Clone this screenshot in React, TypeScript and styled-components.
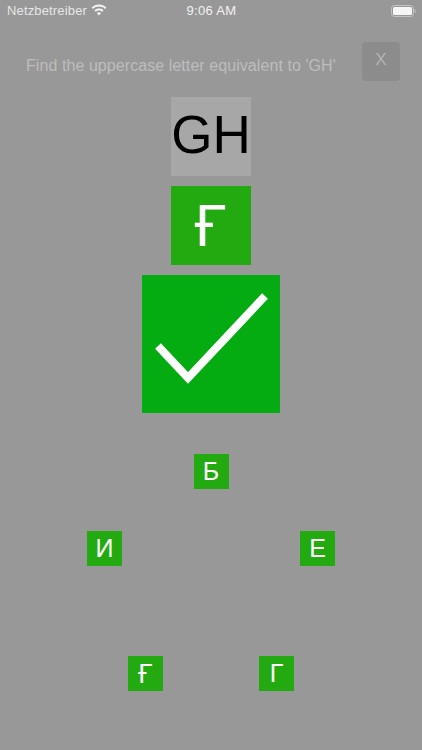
import styled, { createGlobalStyle } from "styled-components";

const GlobalStyle = createGlobalStyle`
  html, body {
    margin: 0;
    padding: 0;
    background: #989898;
  }
  * {
    box-sizing: border-box;
  }
`;

const GREEN = "#23aa11";

export default function App() {
  return (
    <>
      <GlobalStyle />
      <Screen>
        <StatusBar>
          <Carrier>
            Netzbetreiber
            <WifiIcon />
          </Carrier>
          <Clock>9:06 AM</Clock>
          <BatteryIcon />
        </StatusBar>

        <Header>
          <Prompt>Find the uppercase letter equivalent to 'GH'</Prompt>
          <CloseButton>X</CloseButton>
        </Header>

        <Board>
          <QuestionTile>GH</QuestionTile>
          <AnswerTile>Ғ</AnswerTile>
          <CheckTile>
            <svg width="138" height="138" viewBox="0 0 138 138">
              <path
                d="M16 71 L46 103 L123 21"
                fill="none"
                stroke="#fff"
                strokeWidth="8"
                strokeLinejoin="miter"
              />
            </svg>
          </CheckTile>
        </Board>

        <Options>
          <OptionRow $gap={0} $top={41}>
            <OptionTile>Б</OptionTile>
          </OptionRow>
          <OptionRow $gap={178} $top={42}>
            <OptionTile>И</OptionTile>
            <OptionTile>Е</OptionTile>
          </OptionRow>
          <OptionRow $gap={96} $top={90}>
            <OptionTile $alt>Ғ</OptionTile>
            <OptionTile>Г</OptionTile>
          </OptionRow>
        </Options>
      </Screen>
    </>
  );
}

const WifiIcon = () => (
  <svg width="16" height="12" viewBox="0 0 15 11" style={{ marginLeft: 4, marginTop: -2 }}>
    <path
      d="M7.5 0.4C4.9 0.4 2.5 1.4 0.6 3.1L1.9 4.5C3.4 3.1 5.4 2.3 7.5 2.3C9.6 2.3 11.6 3.1 13.1 4.5L14.4 3.1C12.5 1.4 10.1 0.4 7.5 0.4Z"
      fill="#f4f4f4"
    />
    <path
      d="M7.5 4C5.9 4 4.4 4.6 3.2 5.7L4.5 7.1C5.3 6.4 6.4 5.9 7.5 5.9C8.6 5.9 9.7 6.4 10.5 7.1L11.8 5.7C10.6 4.6 9.1 4 7.5 4Z"
      fill="#f4f4f4"
    />
    <path d="M7.5 7.5C6.7 7.5 6 7.8 5.5 8.3L7.5 10.6L9.5 8.3C9 7.8 8.3 7.5 7.5 7.5Z" fill="#f4f4f4" />
  </svg>
);

const BatteryIcon = () => (
  <BatterySlot>
    <svg width="25" height="12" viewBox="0 0 25 12">
      <rect x="0.5" y="0.5" width="22" height="11" rx="3" fill="none" stroke="#c4c4c4" />
      <rect x="2" y="2" width="19" height="8" rx="1.5" fill="#f6f6f6" />
      <path d="M23.6 4V8C24.3 7.7 24.8 7 24.8 6C24.8 5 24.3 4.3 23.6 4Z" fill="#c4c4c4" />
    </svg>
  </BatterySlot>
);

const Screen = styled.div`
  width: 422px;
  height: 750px;
  overflow: hidden;
  background: #989898;
  font-family: "Liberation Sans", Arial, sans-serif;
`;

const StatusBar = styled.div`
  height: 20px;
  padding: 1px 6px 0 7px;
  display: grid;
  grid-template-columns: 1fr auto 1fr;
  align-items: center;
  color: #f2f2f2;
  font-size: 13px;
`;

const Carrier = styled.div`
  display: flex;
  align-items: center;
  letter-spacing: 0.15px;
  color: #e6e6e6;
`;

const Clock = styled.div`
  letter-spacing: 0.3px;
`;

const BatterySlot = styled.div`
  display: flex;
  justify-content: flex-end;
`;

const Header = styled.div`
  height: 77px;
  padding: 22px 22px 0 26px;
  display: flex;
  justify-content: space-between;
  align-items: flex-start;
`;

const Prompt = styled.div`
  margin-top: 15px;
  font-size: 16px;
  line-height: 18px;
  letter-spacing: 0.07px;
  color: #bdbdbd;
`;

const CloseButton = styled.div`
  width: 38px;
  height: 39px;
  padding-bottom: 3px;
  display: flex;
  align-items: center;
  justify-content: center;
  border-radius: 4px;
  background: #8c8c8c;
  color: #b4b4b4;
  font-size: 17px;
`;

const Board = styled.div`
  display: flex;
  flex-direction: column;
  align-items: center;
  row-gap: 10px;
`;

const Tile = styled.div`
  display: flex;
  align-items: center;
  justify-content: center;
`;

const QuestionTile = styled(Tile)`
  width: 80px;
  height: 79px;
  padding-bottom: 4px;
  background: #a7a7a7;
  color: #000;
  font-size: 53px;
`;

const AnswerTile = styled(Tile)`
  width: 80px;
  height: 79px;
  padding-top: 1px;
  background: ${GREEN};
  color: #fff;
  font-family: Roboto, sans-serif;
  font-size: 58px;
`;

const CheckTile = styled(Tile)`
  width: 138px;
  height: 138px;
  background: #04ab11;
`;

const Options = styled.div`
  display: flex;
  flex-direction: column;
  align-items: center;
`;

const OptionRow = styled.div<{ $gap: number; $top: number }>`
  margin-top: ${(p) => p.$top}px;
  display: flex;
  justify-content: center;
  column-gap: ${(p) => p.$gap}px;
`;

const OptionTile = styled(Tile)<{ $alt?: boolean }>`
  width: 35px;
  height: 35px;
  background: ${GREEN};
  color: #fff;
  font-family: ${(p) => (p.$alt ? "Roboto, sans-serif" : "inherit")};
  font-size: ${(p) => (p.$alt ? 26 : 25)}px;
`;
